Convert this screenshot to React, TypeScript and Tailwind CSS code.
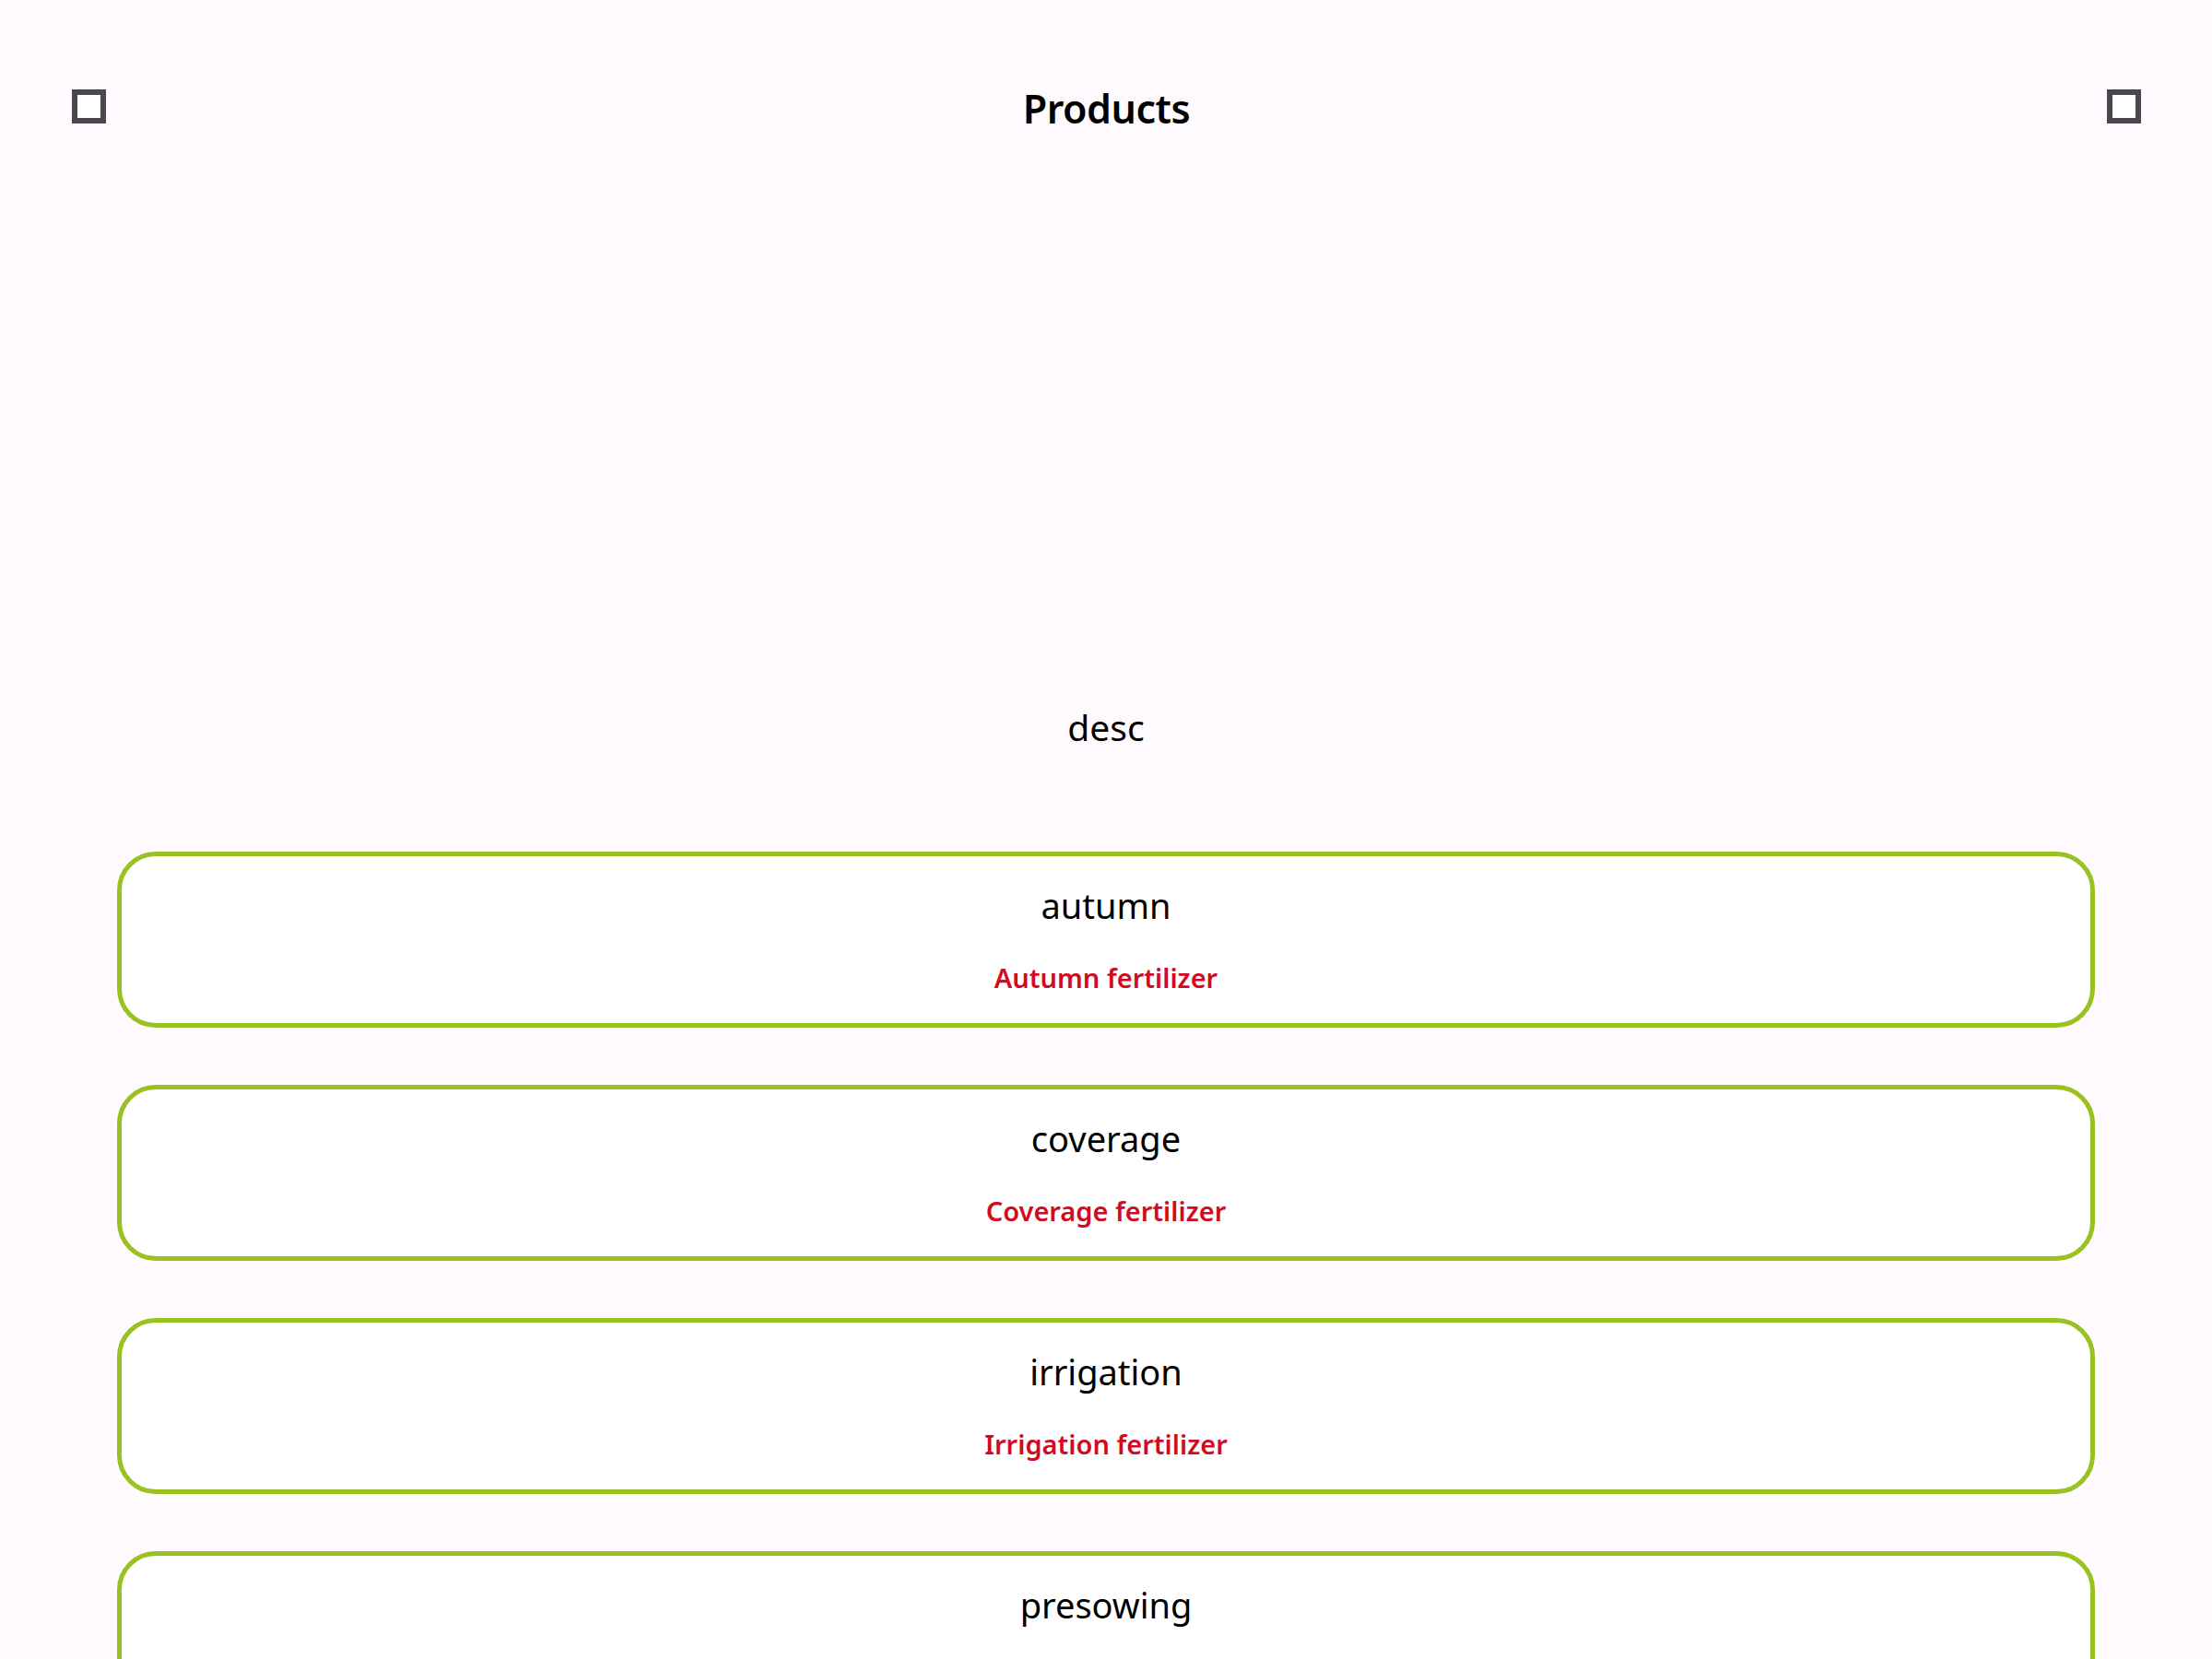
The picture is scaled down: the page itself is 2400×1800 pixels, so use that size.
const products = [
  { key: 'autumn', label: 'Autumn fertilizer' },
  { key: 'coverage', label: 'Coverage fertilizer' },
  { key: 'irrigation', label: 'Irrigation fertilizer' },
  { key: 'presowing', label: 'Presowing fertilizer' },
];

const IconBox = () => (
  <div className="w-[37px] h-[37px] border-[6px] border-[#4a4750] bg-white" />
);

export default function App() {
  return (
    <div className="min-h-screen bg-[#fffafd] text-black font-['Noto_Sans',sans-serif]">
      <header className="flex items-center justify-between pt-[95px] pl-[78px] pr-[77px]">
        <IconBox />
        <h1 className="text-[43px] leading-[40px] font-semibold tracking-[-0.5px] translate-y-[3px]">Products</h1>
        <IconBox />
      </header>

      <p className="mt-[625px] text-center text-[39px] leading-[57px]">desc</p>

      <div className="mt-[107px] px-[127px] flex flex-col gap-[62px] pb-20">
        {products.map((item) => (
          <div
            key={item.key}
            className="bg-white border-[5px] border-[#99c11f] rounded-[42px] pt-[28px] pb-[31px] flex flex-col items-center"
          >
            <div className="text-[38px] leading-[50px]">{item.key}</div>
            <div className="mt-[35px] text-[29px] leading-[37px] font-semibold text-[#d30b1f]">
              {item.label}
            </div>
          </div>
        ))}
      </div>
    </div>
  );
}
